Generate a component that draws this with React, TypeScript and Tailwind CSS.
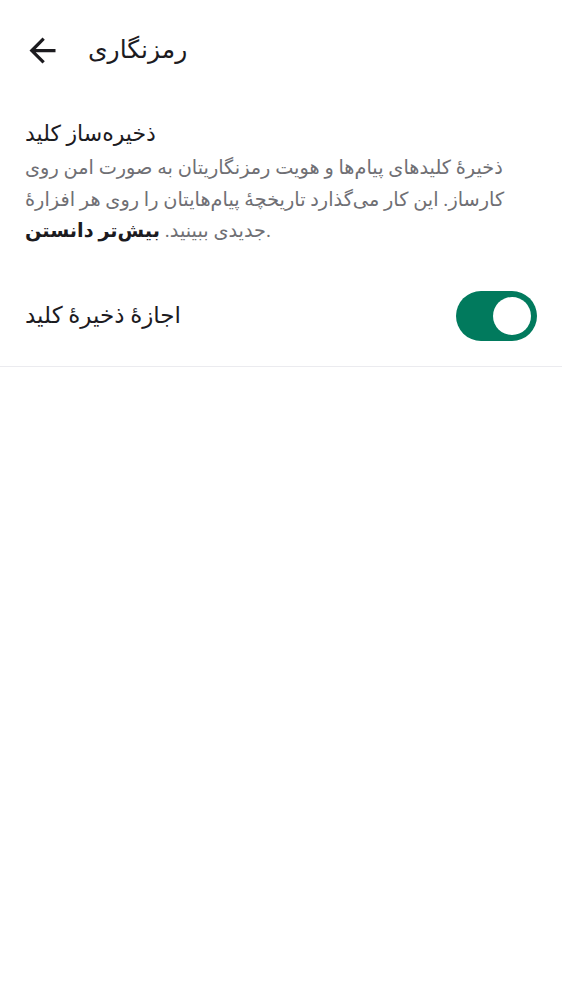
import { useState } from "react";

export default function App() {
  const [enabled, setEnabled] = useState(true);

  return (
    <div
      className="min-h-screen w-full bg-white text-[#1c1b1f]"
      style={{ fontFamily: 'Roboto, "Noto Sans", "DejaVu Sans", sans-serif' }}
      dir="ltr"
    >
      {/* Toolbar */}
      <div className="flex h-[100px] items-center pl-[23px]">
        <button className="flex h-[39px] w-[39px] items-center justify-center text-[#1c1b1f]">
          <svg viewBox="0 0 24 24" className="h-[39px] w-[39px]" fill="currentColor">
            <path d="M20 11H7.83l5.59-5.59L12 4l-8 8 8 8 1.41-1.41L7.83 13H20v-2z" />
          </svg>
        </button>
        <h1 className="ml-[26px] text-[25px] leading-[30px] text-[#1c1b1f]">رمزنگاری</h1>
      </div>

      {/* Key storage */}
      <div className="px-[25px] pt-[18px]">
        <h2 className="text-[22px] leading-[32px] text-[#1c1b1f]">ذخیره‌ساز کلید</h2>
        <p className="mt-[2px] text-[19.3px] leading-[31.5px] text-[#6f6f74]">
          ذخیرهٔ کلیدهای پیام‌ها و هویت رمزنگاریتان به صورت امن روی
          <br />
          کارساز. این کار می‌گذارد تاریخچهٔ پیام‌هایتان را روی هر افزارهٔ
          <br />
          جدیدی ببینید. <span className="font-bold text-[#1c1b1f]">بیش‌تر دانستن</span>.
        </p>
      </div>

      {/* Toggle row */}
      <div className="mt-[19px] flex h-[100px] items-center justify-between px-[25px]">
        <span className="text-[23px] leading-[28px] text-[#1c1b1f]">اجازهٔ ذخیرهٔ کلید</span>
        <button
          onClick={() => setEnabled(!enabled)}
          className={
            enabled
              ? "flex h-[50px] w-[81px] items-center justify-end rounded-full bg-[#017a5d] pr-[6px]"
              : "flex h-[50px] w-[81px] items-center justify-start rounded-full bg-[#e1e3e1] pl-[6px]"
          }
        >
          <span className="h-[38px] w-[38px] rounded-full bg-white" />
        </button>
      </div>

      <div className="h-px w-full bg-[#ebebef]" />
    </div>
  );
}
